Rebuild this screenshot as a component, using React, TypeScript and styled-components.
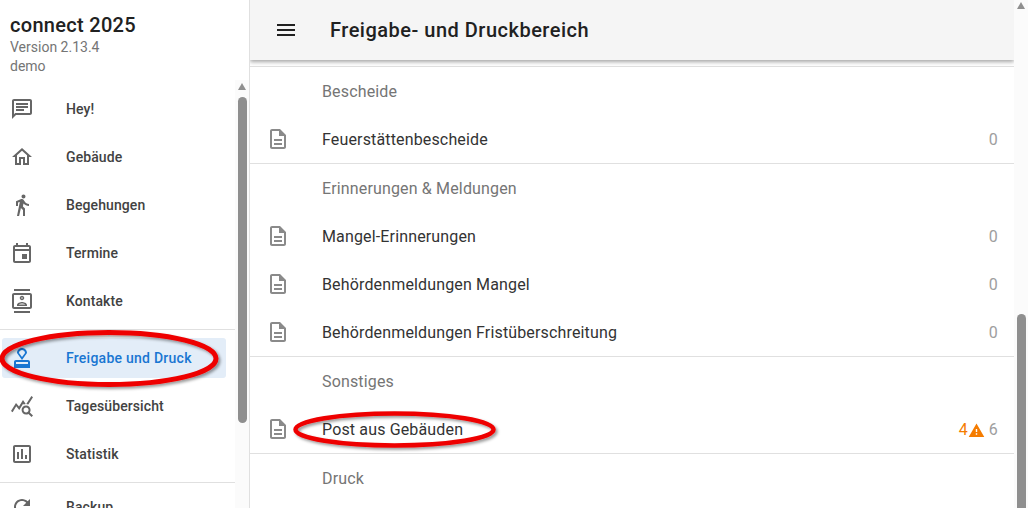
import React from "react";
import styled, { createGlobalStyle } from "styled-components";

const Global = createGlobalStyle`
  html, body { margin: 0; padding: 0; height: 100%; overflow: hidden; background: #fff; }
  body { font-family: Roboto, "Noto Sans", Arial, sans-serif; }
`;
const Page = styled.div`
  position: relative;
  display: flex;
  width: 1028px;
  height: 508px;
  overflow: hidden;
  background: #fff;
`;
const Sidebar = styled.aside`
  width: 250px;
  height: 508px;
  flex: none;
  box-sizing: border-box;
  border-right: 1px solid #e0e0e0;
  display: flex;
  flex-direction: column;
  overflow: hidden;
`;
const Brand = styled.div`
  height: 80px;
  flex: none;
  padding: 13px 0 0 10px;
  box-sizing: border-box;
`;
const BrandName = styled.div`
  font-size: 20px;
  line-height: 25px;
  font-weight: 500;
  letter-spacing: 0.3px;
  color: #212121;
`;
const BrandSub = styled.div`
  font-size: 14px;
  line-height: 19px;
  letter-spacing: 0;
  color: #757575;
`;
const NavWrap = styled.div`
  flex: 1;
  display: flex;
  min-height: 0;
`;
const Nav = styled.nav`
  flex: 1;
  min-width: 0;
  padding-top: 5px;
  overflow: hidden;
`;
const NavItem = styled.div<{ $active?: boolean }>`
  height: 48px;
  display: flex;
  align-items: center;
  margin-right: 9px;
  padding-left: 10px;
  box-sizing: border-box;
  border-radius: 3px;
  font-size: 14px;
  font-weight: 500;
  letter-spacing: 0.1px;
  color: ${(p) => (p.$active ? "#1976d2" : "#424242")};
  background: ${(p) => (p.$active ? "#e3edf8" : "transparent")};
  svg { width: 24px; height: 24px; fill: ${(p) => (p.$active ? "#1976d2" : "#666")}; flex: none; }
  span { margin-left: 32px; }
`;
const ActiveNavItem = styled(NavItem)`
  height: 40px;
  margin: 8px 9px 4px 2px;
  padding-left: 8px;
  letter-spacing: 0.25px;
`;
const NavDivider = styled.div`
  height: 1px;
  background: #e0e0e0;
  margin: 4px 0 0;
`;
const Track = styled.div<{ $top: number; $height: number }>`
  position: relative;
  width: 14px;
  flex: none;
  background: #fbfbfb;
  &::before {
    content: "";
    position: absolute;
    left: 3px;
    top: ${(p) => p.$top}px;
    width: 9px;
    height: ${(p) => p.$height}px;
    background: #8f8f8f;
    border-radius: 5px;
  }
`;
const Arrow = styled.div<{ $top: number }>`
  position: absolute;
  left: 3px;
  top: ${(p) => p.$top}px;
  width: 0;
  height: 0;
  border-left: 4.5px solid transparent;
  border-right: 4.5px solid transparent;
  border-bottom: 7px solid #8f8f8f;
`;
const Main = styled.main`
  flex: 1;
  min-width: 0;
  display: flex;
`;
const Column = styled.div`
  flex: 1;
  min-width: 0;
  display: flex;
  flex-direction: column;
  overflow: hidden;
`;
const Header = styled.header`
  position: relative;
  z-index: 1;
  height: 60px;
  flex: none;
  display: flex;
  align-items: center;
  padding-left: 24px;
  background: #f5f5f5;
  box-shadow: 0 2px 4px rgba(0, 0, 0, 0.35);
  svg { width: 24px; height: 24px; fill: #212121; flex: none; }
`;
const Title = styled.h1`
  margin: 0 0 0 32px;
  font-size: 20px;
  font-weight: 500;
  letter-spacing: 0.5px;
  color: #212121;
`;
const Content = styled.div`
  flex: 1;
  min-height: 0;
  padding-top: 6px;
`;
const Section = styled.section`
  border-top: 1px solid #e0e0e0;
`;
const SectionTitle = styled.div`
  height: 48px;
  display: flex;
  align-items: center;
  padding-left: 72px;
  font-size: 16px;
  letter-spacing: 0.15px;
  color: #757575;
`;
const Row = styled.div`
  height: 48px;
  display: flex;
  align-items: center;
  padding: 0 16px 0 16px;
  font-size: 16px;
  letter-spacing: 0.15px;
  color: #333;
  svg { width: 24px; height: 24px; fill: #8a8a8a; flex: none; }
`;
const RowLabel = styled.span`
  margin-left: 32px;
  flex: 1;
`;
const Count = styled.span`
  color: #9e9e9e;
`;
const Warn = styled.span`
  color: #f57c00;
  display: flex;
  align-items: center;
  margin-right: 4px;
  svg { width: 17px; height: 17px; fill: #f57c00; margin: 3px 0 0 0; }
`;
const Marks = styled.svg`
  position: absolute;
  left: 0;
  top: 0;
  width: 1028px;
  height: 508px;
  pointer-events: none;
  z-index: 2;
`;

const P = {
  chat: "M20 2H4c-1.1 0-2 .9-2 2v18l4-4h14c1.1 0 2-.9 2-2V4c0-1.1-.9-2-2-2zm0 14H5.17L4 17.17V4h16v12zM6 12h8v2H6zm0-3h12v2H6zm0-3h12v2H6z",
  home: "M12 5.69l5 4.5V18h-2v-6H9v6H7v-7.81l5-4.5M12 3L2 12h3v8h6v-6h2v6h6v-8h3L12 3z",
  walk: "M13.5 5.5c1.1 0 2-.9 2-2s-.9-2-2-2-2 .9-2 2 .9 2 2 2zM9.8 8.9L7 23h2.1l1.8-8 2.1 2v6h2v-7.5l-2.1-2 .6-3C14.8 12 16.8 13 19 13v-2c-1.9 0-3.5-1-4.3-2.4l-1-1.6c-.4-.6-1-1-1.7-1-.3 0-.5.1-.8.1L6 8.3V13h2V9.6l1.8-.7",
  event: "M19 4h-1V2h-2v2H8V2H6v2H5c-1.11 0-1.99.9-1.99 2L3 20c0 1.1.89 2 2 2h14c1.1 0 2-.9 2-2V6c0-1.1-.9-2-2-2zm0 16H5V10h14v10zm0-12H5V6h14v2zm-7 5h5v5h-5z",
  contacts: "M20 0H4v2h16V0zM4 24h16v-2H4v2zM20 4H4c-1.1 0-2 .9-2 2v12c0 1.1.9 2 2 2h16c1.1 0 2-.9 2-2V6c0-1.1-.9-2-2-2zm0 14H4V6h16v12zm-8-6.75c1.24 0 2.25-1.01 2.25-2.25S13.24 6.75 12 6.75 9.75 7.76 9.75 9s1.01 2.25 2.25 2.25zm0-3c.41 0 .75.34.75.75s-.34.75-.75.75-.75-.34-.75-.75.34-.75.75-.75zM17 15.99c0-2.09-3.31-2.99-5-2.99s-5 .9-5 2.99V17h10v-1.01zM8.81 15.5c.61-.52 2.03-1 3.19-1 1.17 0 2.59.48 3.2 1H8.81z",
  stamp: "M4 16v6h16v-6c0-1.1-.9-2-2-2H6c-1.1 0-2 .9-2 2zm14 2H6v-2h12v2zM12 2C9.24 2 7 4.24 7 7l5 7 5-7c0-2.76-2.24-5-5-5zm0 9L9 7c0-1.66 1.34-3 3-3s3 1.34 3 3l-3 4z",
  query: "M19.88 18.47c.44-.7.7-1.51.7-2.39 0-2.49-2.01-4.5-4.5-4.5s-4.5 2.01-4.5 4.5 2.01 4.5 4.49 4.5c.88 0 1.7-.26 2.39-.7L21.58 23 23 21.58l-3.12-3.11zm-3.8.11c-1.38 0-2.5-1.12-2.5-2.5s1.12-2.5 2.5-2.5 2.5 1.12 2.5 2.5-1.12 2.5-2.5 2.5zm-.36-8.5c-.74.02-1.45.18-2.1.45l-.55-.83-3.8 6.18-3.01-3.52-3.63 5.81L1 17l5-8 3 3.5L13 6l2.72 4.08zm2.59.5c-.64-.28-1.33-.45-2.05-.49L21.38 2 23 3.18l-4.69 7.4z",
  stats: "M19 3H5c-1.1 0-2 .9-2 2v14c0 1.1.9 2 2 2h14c1.1 0 2-.9 2-2V5c0-1.1-.9-2-2-2zm0 16H5V5h14v14zM7 10h2v7H7zm4-3h2v10h-2zm4 6h2v4h-2z",
  refresh: "M17.65 6.35C16.2 4.9 14.21 4 12 4c-4.42 0-7.99 3.58-7.99 8s3.57 8 7.99 8c3.73 0 6.84-2.55 7.73-6h-2.08c-.82 2.33-3.04 4-5.65 4-3.31 0-6-2.69-6-6s2.69-6 6-6c1.66 0 3.14.69 4.22 1.78L13 11h7V4l-2.35 2.35z",
  doc: "M8 16h8v2H8zm0-4h8v2H8zm6-10H6c-1.1 0-2 .9-2 2v16c0 1.1.89 2 1.99 2H18c1.1 0 2-.9 2-2V8l-6-6zm4 18H6V4h7v5h5v11z",
  warn: "M1 21h22L12 2 1 21zm12-3h-2v-2h2v2zm0-4h-2v-4h2v4z",
  menu: "M3 18h18v-2H3v2zm0-5h18v-2H3v2zm0-7v2h18V6H3z",
};
const Icon = ({ d }: { d: string }) => (
  <svg viewBox="0 0 24 24" aria-hidden="true"><path d={d} /></svg>
);
const DocRow = ({ label, count, warn }: { label: string; count: number; warn?: number }) => (
  <Row>
    <Icon d={P.doc} />
    <RowLabel>{label}</RowLabel>
    {warn !== undefined && <Warn>{warn}<Icon d={P.warn} /></Warn>}
    <Count>{count}</Count>
  </Row>
);

export default function App() {
  return (
    <Page>
      <Global />
      <Sidebar>
        <Brand>
          <BrandName>connect 2025</BrandName>
          <BrandSub>Version 2.13.4</BrandSub>
          <BrandSub>demo</BrandSub>
        </Brand>
        <NavWrap>
          <Nav>
            <NavItem><Icon d={P.chat} /><span>Hey!</span></NavItem>
            <NavItem><Icon d={P.home} /><span>Gebäude</span></NavItem>
            <NavItem><Icon d={P.walk} /><span>Begehungen</span></NavItem>
            <NavItem><Icon d={P.event} /><span>Termine</span></NavItem>
            <NavItem><Icon d={P.contacts} /><span>Kontakte</span></NavItem>
            <NavDivider />
            <ActiveNavItem $active><Icon d={P.stamp} /><span>Freigabe und Druck</span></ActiveNavItem>
            <NavItem><Icon d={P.query} /><span>Tagesübersicht</span></NavItem>
            <NavItem><Icon d={P.stats} /><span>Statistik</span></NavItem>
            <NavDivider />
            <NavItem><Icon d={P.refresh} /><span>Backup</span></NavItem>
          </Nav>
          <Track $top={17} $height={326}><Arrow $top={3} /></Track>
        </NavWrap>
      </Sidebar>
      <Main>
        <Column>
          <Header>
            <Icon d={P.menu} />
            <Title>Freigabe- und Druckbereich</Title>
          </Header>
          <Content>
            <Section>
              <SectionTitle>Bescheide</SectionTitle>
              <DocRow label="Feuerstättenbescheide" count={0} />
            </Section>
            <Section>
              <SectionTitle>Erinnerungen &amp; Meldungen</SectionTitle>
              <DocRow label="Mangel-Erinnerungen" count={0} />
              <DocRow label="Behördenmeldungen Mangel" count={0} />
              <DocRow label="Behördenmeldungen Fristüberschreitung" count={0} />
            </Section>
            <Section>
              <SectionTitle>Sonstiges</SectionTitle>
              <DocRow label="Post aus Gebäuden" count={6} warn={4} />
            </Section>
            <Section>
              <SectionTitle>Druck</SectionTitle>
            </Section>
          </Content>
        </Column>
        <Track $top={314} $height={240}><Arrow $top={2} /></Track>
      </Main>
      <Marks viewBox="0 0 1028 508" aria-hidden="true">
        <defs>
          <filter id="sh" x="-10%" y="-30%" width="120%" height="160%">
            <feDropShadow dx="2" dy="2" stdDeviation="1.5" floodColor="#000" floodOpacity="0.4" />
          </filter>
        </defs>
        <ellipse cx="109" cy="358.5" rx="107" ry="26" fill="none" stroke="#ee0000" strokeWidth="5" filter="url(#sh)" />
        <ellipse cx="394.5" cy="429.5" rx="99" ry="16" fill="none" stroke="#ee0000" strokeWidth="4.5" filter="url(#sh)" />
      </Marks>
    </Page>
  );
}
